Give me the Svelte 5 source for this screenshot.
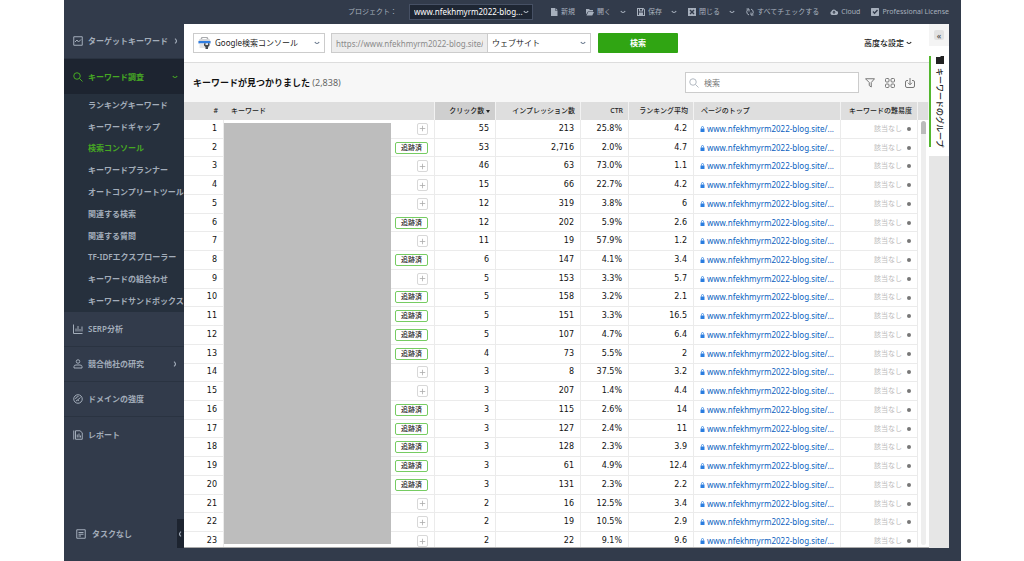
<script lang="ts">
	interface Row {
		tracked: boolean;
		clicks: number;
		impressions: string;
		ctr: string;
		rank: string;
	}

	const make = (tracked: number, clicks: number, impressions: string, ctr: string, rank: string): Row => ({
		tracked: tracked === 1,
		clicks,
		impressions,
		ctr: ctr + '%',
		rank
	});

	const rows: Row[] = [
		make(0, 55, '213', '25.8', '4.2'),
		make(1, 53, '2,716', '2.0', '4.7'),
		make(0, 46, '63', '73.0', '1.1'),
		make(0, 15, '66', '22.7', '4.2'),
		make(0, 12, '319', '3.8', '6'),
		make(1, 12, '202', '5.9', '2.6'),
		make(0, 11, '19', '57.9', '1.2'),
		make(1, 6, '147', '4.1', '3.4'),
		make(0, 5, '153', '3.3', '5.7'),
		make(1, 5, '158', '3.2', '2.1'),
		make(1, 5, '151', '3.3', '16.5'),
		make(1, 5, '107', '4.7', '6.4'),
		make(1, 4, '73', '5.5', '2'),
		make(0, 3, '8', '37.5', '3.2'),
		make(0, 3, '207', '1.4', '4.4'),
		make(1, 3, '115', '2.6', '14'),
		make(1, 3, '127', '2.4', '11'),
		make(1, 3, '128', '2.3', '3.9'),
		make(1, 3, '61', '4.9', '12.4'),
		make(1, 3, '131', '2.3', '2.2'),
		make(0, 2, '16', '12.5', '3.4'),
		make(0, 2, '19', '10.5', '2.9'),
		make(0, 2, '22', '9.1', '9.6')
	];

	const research = [
		'ランキングキーワード',
		'キーワードギャップ',
		'検索コンソール',
		'キーワードプランナー',
		'オートコンプリートツール',
		'関連する検索',
		'関連する質問',
		'TF-IDFエクスプローラー',
		'キーワードの組合わせ',
		'キーワードサンドボックス'
	];

	const actions = [
		{ icon: 'file', label: '新規', menu: false },
		{ icon: 'folder', label: '開く', menu: true },
		{ icon: 'save', label: '保存', menu: true },
		{ icon: 'close', label: '閉じる', menu: true },
		{ icon: 'sync', label: 'すべてチェックする', menu: false },
		{ icon: 'cloud', label: 'Cloud', menu: false },
		{ icon: 'license', label: 'Professional License', menu: false }
	];

	let current = $state('検索コンソール');
	let filter = $state('');
	let url = $state('https://www.nfekhmyrm2022-blog.site/');
</script>

{#snippet chevron()}
	<svg class="chevron" viewBox="0 0 6 6"><path d="M0.8 2 Q3 5 5.2 2" /></svg>
{/snippet}

{#snippet arrow()}
	<svg class="chevron" viewBox="0 0 6 6"><path d="M2 0.6 Q5 3 2 5.4" /></svg>
{/snippet}

{#snippet actionIcon(name: string)}
	<svg class="action-icon" viewBox="0 0 16 16">
		{#if name === 'file'}
			<path d="M2 0h8v5h5v11H2z M11 0l4 4h-4z" />
		{:else if name === 'folder'}
			<path d="M0 2h6l2 2h6v3H4L0 13z M4.500 8H16l-3.500 7H1z" />
		{:else if name === 'save'}
			<path fill-rule="evenodd" d="M0 0h13l3 3v13H0z M2 2v12h12V4l-2-2v5H4V2z M6 2v3h4V2z M4 9h8v5H4z" />
		{:else if name === 'close'}
			<path fill-rule="evenodd" d="M0 0h16v16H0z M3 5l3 3-3 3 2 2 3-3 3 3 2-2-3-3 3-3-2-2-3 3-3-3z" />
		{:else if name === 'sync'}
			<path class="line" d="M6 14Q1 12 1.500 7Q2 4 5 2M1 2h5v5M10 2Q15 4 14.500 9Q14 12 11 14M15 14h-5V9" />
		{:else if name === 'cloud'}
			<path fill-rule="evenodd" d="M4 14a4 4 0 0 1-1-7.500A5 5 0 0 1 12.500 6A4 4 0 0 1 12 14z M8 5L4.500 9H7v3h2V9h2.500z" />
		{:else}
			<path fill-rule="evenodd" d="M1 0h14l1 1v14l-1 1H1l-1-1V1z M3 8l4 4.500L14 5l-2-2-5 5.500L5 6z" />
		{/if}
	</svg>
{/snippet}

<div class="window">
	<header class="topbar">
		<label for="project">プロジェクト：</label>
		<div class="select project">
			<select id="project"><option>www.nfekhmyrm2022-blog...</option></select>
			{@render chevron()}
		</div>
		<div class="actions">
			{#each actions as action}
				<button>
					{@render actionIcon(action.icon)}
					<span>{action.label}</span>
					{#if action.menu}<i>{@render chevron()}</i>{/if}
				</button>
			{/each}
		</div>
	</header>

	<nav class="sidebar">
		<button class="item">
			<svg class="icon" viewBox="0 0 20 20"><path d="M1.500 1.500h17v17h-17z M4 12l4-4 3 4 5-5" /></svg>
			<span>ターゲットキーワード</span>
			{@render arrow()}
		</button>
		<button class="item open">
			<svg class="icon" viewBox="0 0 20 20"><circle cx="8" cy="8" r="6.500" /><path d="M13 13l6 6" /></svg>
			<span>キーワード調査</span>
			{@render chevron()}
		</button>
		<div class="submenu">
			{#each research as name}
				<button class:current={current === name} onclick={() => (current = name)}>{name}</button>
			{/each}
		</div>
		<button class="item">
			<svg class="icon" viewBox="0 0 20 20"><path d="M1 1v18h18M6 15V9M10 15V4M14 15v-5M18 15V5" /></svg>
			<span>SERP分析</span>
		</button>
		<button class="item">
			<svg class="icon" viewBox="0 0 20 20"><circle cx="10" cy="5" r="3.500" /><path d="M2 18v-3q0-3 4-3h8q4 0 4 3v3z" /></svg>
			<span>競合他社の研究</span>
			{@render arrow()}
		</button>
		<button class="item">
			<svg class="icon" viewBox="0 0 20 20"><circle cx="10" cy="10" r="8.500" /><path d="M5 10q1-5 6-5M9 12l6-5M6 14l3-2 3 1" /></svg>
			<span>ドメインの強度</span>
		</button>
		<button class="item last">
			<svg class="icon" viewBox="0 0 20 20"><path d="M1.500 1v18M5 1.500h9l4.500 4v13H5zM8.500 15V9M12 15V7M15 15v-4" /></svg>
			<span>レポート</span>
		</button>
		<div class="tasks">
			<button>
				<svg class="icon" viewBox="0 0 20 20"><path d="M1.500 1.500h17v17h-17zM5 7h10M5 10.500h10M5 14h5" /></svg>
				<span>タスクなし</span>
			</button>
			<button class="fold" aria-label="サイドバー">
				<svg class="chevron" viewBox="0 0 6 6"><path d="M4 0.600Q1 3 4 5.400" /></svg>
			</button>
		</div>
	</nav>

	<main>
		<form class="query" onsubmit={(e) => e.preventDefault()}>
			<div class="select source">
				<svg class="source-icon" viewBox="0 0 26 24">
					<path fill="#a9abae" d="M7 0h12l2 4h-3l-1-2H9L8 4H5z" />
					<path fill="#d5d6d8" d="M3 4h20l3 7H0z" />
					<path fill="#2f7de1" d="M1 8h24v5H1z" />
					<path fill="#e4e5e6" d="M3 13h20v9H3z" />
					<path fill="#44484d" d="M12 13v4l3 3v4h5v-4l3-3v-4l-3-1v4h-5v-4z" />
				</svg>
				<select aria-label="データソース"><option>Google検索コンソール</option></select>
				{@render chevron()}
			</div>
			<input class="url" aria-label="URL" bind:value={url} />
			<div class="select scope">
				<select aria-label="範囲"><option>ウェブサイト</option></select>
				{@render chevron()}
			</div>
			<button class="submit">検索</button>
			<button type="button" class="advanced">高度な設定 {@render chevron()}</button>
		</form>

		<div class="heading">
			<h1>キーワードが見つかりました <small>(2,838)</small></h1>
			<div class="filter">
				<svg viewBox="0 0 20 20"><circle cx="8" cy="8" r="6.500" /><path d="M13 13l6 6" /></svg>
				<input type="search" placeholder="検索" aria-label="検索" bind:value={filter} />
			</div>
			<button class="tool" aria-label="フィルター">
				<svg viewBox="0 0 20 20"><path d="M1 1.500h18L12.500 9v9l-4-3V9z" /></svg>
			</button>
			<button class="tool" aria-label="表示">
				<svg viewBox="0 0 20 20">
					<rect x="1" y="1" width="7" height="7" rx="2" /><rect x="12" y="1" width="7" height="7" rx="2" />
					<rect x="1" y="12" width="7" height="7" rx="2" /><rect x="12" y="12" width="7" height="7" rx="2" />
				</svg>
			</button>
			<button class="tool" aria-label="ダウンロード">
				<svg viewBox="0 0 20 20"><path d="M6 5H4Q1 5 1 8v8q0 3 3 3h12q3 0 3-3V8q0-3-3-3h-2M10 0v13M6 9.500l4 4 4-4" /></svg>
			</button>
		</div>

		<div class="results">
			<table>
				<colgroup>
					<col class="c-num" /><col /><col class="c-track" /><col class="c-clicks" /><col class="c-impr" />
					<col class="c-ctr" /><col class="c-rank" /><col class="c-page" /><col class="c-diff" /><col class="c-bar" />
				</colgroup>
				<thead>
					<tr>
						<th>#</th>
						<th class="left plain" colspan="2">キーワード</th>
						<th class="sorted">クリック数 <svg class="sort" viewBox="0 0 4 3"><path d="M0 0h4L2 3z" /></svg></th>
						<th>インプレッション数</th>
						<th>CTR</th>
						<th>ランキング平均</th>
						<th class="left">ページのトップ</th>
						<th>キーワードの難易度</th>
						<th></th>
					</tr>
				</thead>
				<tbody>
					{#each rows as row, i}
						<tr>
							<td>{i + 1}</td>
							{#if i === 0}<td class="masked" rowspan={rows.length}></td>{/if}
							<td class="track">
								{#if row.tracked}
									<span class="tag">追跡済</span>
								{:else}
									<button class="add" aria-label="追加"><svg viewBox="0 0 9 9"><path d="M4.500 1v7M1 4.500h7" /></svg></button>
								{/if}
							</td>
							<td>{row.clicks}</td>
							<td>{row.impressions}</td>
							<td>{row.ctr}</td>
							<td>{row.rank}</td>
							<td class="page">
								<a href="#page">
									<svg class="lock" viewBox="0 0 10 12"><path d="M1 5h8v7H1z" /><path class="ring" d="M3 5V3q0-2 2-2t2 2v2" /></svg>www.nfekhmyrm2022-blog.site/...
								</a>
							</td>
							<td class="diff">該当なし<span class="dot"></span></td>
							{#if i === 0}<td class="gutter" rowspan={rows.length}></td>{/if}
						</tr>
					{/each}
				</tbody>
			</table>
			<div class="scrollbar"></div>
		</div>
	</main>

	<aside>
		<div class="collapse"><button aria-label="閉じる">«</button></div>
		<div class="tabs">
			<button>
				<svg viewBox="0 0 8 8"><path d="M0 1h4l1-1h3v8H0z" /></svg>
				<span>キーワードのグループ</span>
			</button>
		</div>
	</aside>
</div>

<style>
	:global(body) {
		background: #fff;
	}

	.window {
		display: grid;
		grid-template-columns: 120px 1fr 20px;
		grid-template-rows: 24px 1fr;
		box-sizing: border-box;
		height: 100vh;
		margin: 0 63px 0 64px;
		padding: 0 12px 13px 0;
		background: #323b4b;
		color: #222;
		font: 8px/12px "Noto Sans", "Noto Sans CJK JP", sans-serif;
	}

	button,
	select,
	input {
		box-sizing: border-box;
		margin: 0;
		padding: 0;
		border: 0;
		background: none;
		color: inherit;
		font: inherit;
	}

	svg {
		display: block;
		flex: none;
		fill: none;
		stroke: currentColor;
	}

	.chevron {
		width: 6px;
		height: 6px;
		stroke-width: 1.2;
	}

	.select {
		position: relative;
		display: flex;
		align-items: center;
		box-sizing: border-box;
		height: 20px;
		border: 1px solid #ccc;
		background: #fff;
	}

	.select select {
		appearance: none;
		width: 100%;
		height: 100%;
		padding: 0 12px 0 4px;
	}

	.select .chevron {
		position: absolute;
		right: 4px;
		color: #65758a;
		pointer-events: none;
	}

	.topbar {
		grid-column: 1 / -1;
		display: flex;
		align-items: center;
		justify-content: flex-end;
		color: #a7b0bd;
	}

	.topbar label {
		font-size: 7px;
		margin-right: 12px;
	}

	.project {
		width: 124px;
		height: 16px;
		margin-right: 17px;
		border-color: #465064;
		background: #1e2633;
		color: #fff;
	}

	.project select {
		padding-right: 8px;
	}

	.project .chevron {
		right: 3px;
		color: #b9c1cc;
	}

	.actions {
		display: flex;
		gap: 11px;
	}

	.actions button {
		display: flex;
		align-items: center;
		gap: 3px;
		font-size: 7px;
	}

	.actions i {
		margin-left: 6px;
	}

	.action-icon {
		width: 8px;
		height: 8px;
		fill: currentColor;
		stroke: none;
	}

	.action-icon .line {
		fill: none;
		stroke: currentColor;
		stroke-width: 2;
	}

	.sidebar {
		display: flex;
		flex-direction: column;
		min-width: 0;
		color: #a3adba;
		font-weight: 600;
	}

	.sidebar button {
		text-align: left;
		white-space: nowrap;
	}

	.item {
		display: flex;
		align-items: center;
		gap: 5px;
		height: 35px;
		padding: 0 6px 0 9px;
		border-bottom: 1px solid #2a3341;
	}

	.item.last {
		border-bottom: 0;
	}

	.item .chevron {
		margin-left: auto;
	}

	.icon {
		width: 10px;
		height: 10px;
		stroke-width: 2;
	}

	.item.open {
		border-bottom: 0;
		background: #1d2430;
		color: #46a823;
	}

	.submenu {
		display: grid;
		grid-auto-rows: 1fr;
		height: 218px;
		background: #26303d;
	}

	.submenu button {
		padding-left: 24px;
	}

	.submenu .current {
		color: #46a823;
	}

	.tasks {
		display: flex;
		justify-content: space-between;
		height: 29px;
		margin-top: auto;
		padding-left: 12px;
	}

	.tasks button {
		display: flex;
		align-items: center;
		gap: 6px;
	}

	.tasks .fold {
		width: 7px;
		background: #1d2430;
	}

	main {
		display: flex;
		flex-direction: column;
		min-width: 0;
		min-height: 0;
		background: #fff;
	}

	.query {
		display: flex;
		align-items: center;
		height: 38px;
		padding: 0 17px 0 9px;
		border-bottom: 1px solid #ddd;
	}

	.source {
		width: 132px;
		margin-right: 6px;
		padding-left: 4px;
	}

	.source-icon {
		width: 13px;
		height: 12px;
		stroke: none;
	}

	.url {
		width: 156px;
		height: 20px;
		padding: 0 4px;
		border: 1px solid #ccc;
		border-right: 0;
		background: #ededed;
		color: #8a8a8a;
	}

	.scope {
		width: 104px;
		margin-right: 7px;
	}

	.submit {
		width: 80px;
		height: 20px;
		border-radius: 1px;
		background: #30a513;
		color: #fff;
		font-weight: 700;
	}

	.advanced {
		display: flex;
		align-items: center;
		gap: 2px;
		margin-left: auto;
		font-weight: 500;
	}

	.heading {
		display: flex;
		align-items: center;
		gap: 10px;
		height: 39px;
		padding: 0 14px 0 9px;
		background: #f7f7f7;
	}

	h1 {
		flex: 1;
		margin: 0;
		color: #111;
		font-size: 9px;
		font-weight: 700;
	}

	h1 small {
		color: #666;
		font-size: 9px;
		font-weight: 400;
	}

	.filter {
		display: flex;
		align-items: center;
		box-sizing: border-box;
		gap: 5px;
		width: 174px;
		height: 21px;
		margin-right: -4px;
		padding-left: 3px;
		border: 1px solid #ccc;
		background: #fff;
		color: #b3bac2;
	}

	.filter svg {
		width: 10px;
		height: 10px;
		stroke-width: 2;
	}

	.filter input {
		flex: 1;
		min-width: 0;
		outline: 0;
		color: #222;
	}

	.filter input::placeholder {
		color: #777;
	}

	.tool {
		color: #777;
	}

	.tool svg {
		width: 10px;
		height: 10px;
		stroke-width: 2;
	}

	.results {
		position: relative;
		flex: 1;
		min-height: 0;
		overflow: hidden;
		border-bottom: 1px solid #aaa;
	}

	table {
		width: 100%;
		height: calc(100% + 4px);
		border-spacing: 0;
		table-layout: fixed;
	}

	.c-num {
		width: 40px;
	}

	.c-track {
		width: 44px;
	}

	.c-clicks {
		width: 61px;
	}

	.c-impr {
		width: 85px;
	}

	.c-ctr {
		width: 48px;
	}

	.c-rank {
		width: 65px;
	}

	.c-page {
		width: 147px;
	}

	.c-diff {
		width: 77px;
	}

	.c-bar {
		width: 11px;
	}

	th {
		height: 18px;
		padding: 0 5px 0 0;
		border-right: 1px solid #f2f2f2;
		background: #dedede;
		font-size: 7px;
		font-weight: 500;
		line-height: 10px;
		text-align: right;
		white-space: nowrap;
	}

	th:first-child {
		border-right-color: #dedede;
	}

	th.left {
		padding-left: 7px;
		text-align: left;
	}

	th.sorted {
		background: #cfcfcf;
	}

	.sort {
		display: inline-block;
		width: 4px;
		height: 3px;
		vertical-align: middle;
		fill: #222;
		stroke: none;
	}

	td {
		padding: 0 6px 0 0;
		border-right: 1px solid #ebebeb;
		border-bottom: 1px solid #ebebeb;
		color: #111;
		font-family: "DejaVu Sans", "Noto Sans CJK JP", sans-serif;
		line-height: 10px;
		text-align: right;
		white-space: nowrap;
	}

	td.masked {
		border: 0;
		border-top: 3px solid #fff;
		border-bottom: 7px solid #fff;
		background: #bdbdbd;
		background-clip: padding-box;
	}

	.tag {
		display: inline-block;
		box-sizing: border-box;
		width: 33px;
		height: 12px;
		border: 1px solid #76cc62;
		border-radius: 2px;
		color: #222;
		font-size: 7px;
		font-weight: 500;
		line-height: 10px;
		text-align: center;
		vertical-align: middle;
	}

	.add {
		display: inline-block;
		width: 11px;
		height: 12px;
		padding: 1px;
		border: 1px solid #d8d8d8;
		border-radius: 2px;
		color: #aaa;
		vertical-align: middle;
	}

	td.page {
		padding-left: 6px;
		font-family: "Noto Sans", sans-serif;
		text-align: left;
	}

	.page a {
		display: flex;
		align-items: center;
		gap: 2px;
		color: #0b5fc0;
		text-decoration: none;
	}

	.lock {
		width: 5px;
		height: 6px;
		fill: #2a7de0;
		stroke: none;
	}

	.lock .ring {
		fill: none;
		stroke: #2a7de0;
		stroke-width: 1.5;
	}

	td.diff {
		color: #bbb;
		font-size: 7px;
	}

	.dot {
		display: inline-block;
		width: 4px;
		height: 4px;
		margin-left: 5px;
		border-radius: 50%;
		background: #777;
		vertical-align: middle;
	}

	td.gutter {
		padding: 0;
		border: 0;
	}

	.scrollbar {
		position: absolute;
		top: 19px;
		right: 3px;
		bottom: 2px;
		width: 5px;
		border-radius: 3px;
		background: linear-gradient(#bbb 13px, #eee 13px);
	}

	aside {
		display: flex;
		flex-direction: column;
		background: #e6e6e6;
	}

	.collapse {
		display: flex;
		align-items: center;
		justify-content: center;
		height: 22px;
		background: #f4f4f4;
	}

	.collapse button {
		width: 10px;
		height: 10px;
		border-radius: 2px;
		background: #e2e2e2;
		color: #444;
		font-size: 9px;
		line-height: 9px;
	}

	.tabs {
		padding: 10px 0 9px;
		background: #fff;
	}

	.tabs button {
		display: flex;
		flex-direction: column;
		align-items: center;
		gap: 4px;
		width: 100%;
		height: 91px;
		border-left: 2px solid #53b72f;
	}

	.tabs svg {
		width: 8px;
		height: 8px;
		fill: #222;
		stroke: none;
	}

	.tabs span {
		font-weight: 500;
		line-height: 12px;
		text-orientation: sideways;
		writing-mode: vertical-rl;
		white-space: nowrap;
	}
</style>
